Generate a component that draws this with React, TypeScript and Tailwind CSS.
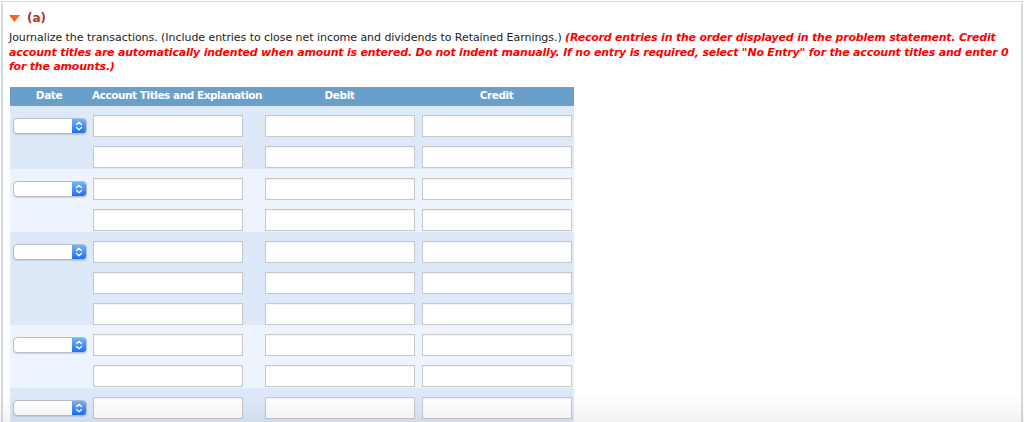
import React from "react";

const groups = [2, 2, 3, 2, 2];

function DateSelect() {
  return (
    <div className="flex h-[16px] w-[74px] rounded-[4px] border border-[#b9bec6] bg-white shadow-[0_1px_1px_rgba(0,0,0,0.12)] overflow-hidden">
      <div className="flex-1" />
      <div className="flex w-[14px] items-center justify-center bg-gradient-to-b from-[#6fb3ff] to-[#1c6ff0]">
        <svg width="8" height="10" viewBox="0 0 8 10" fill="none" stroke="white" strokeWidth="1.3" strokeLinecap="round" strokeLinejoin="round">
          <path d="M1.5 3.5 L4 1.2 L6.5 3.5" />
          <path d="M1.5 6.5 L4 8.8 L6.5 6.5" />
        </svg>
      </div>
    </div>
  );
}

function Box() {
  return <div className="h-[22px] w-[150px] border border-[#c8c8c8] bg-white shadow-[inset_0_1px_1px_rgba(0,0,0,0.05)]" />;
}

export default function App() {
  return (
    <div className="relative h-[422px] w-[1024px] overflow-hidden bg-white pt-px pl-px font-['DejaVu_Sans',sans-serif] text-[#222]">
      <div className="h-[440px] w-[1022px] border-t border-l-2 border-r-2 border-[#d3dbe5] pl-[6px] pt-[9px]">
        <div className="flex h-[14px] items-center">
          <svg width="11" height="7" viewBox="0 0 11 7">
            <polygon points="0,0 11,0 5.5,7" fill="#f26522" />
          </svg>
          <span className="ml-[7px] text-[12px] font-bold text-[#a5392a]">(a)</span>
        </div>
        <div className="mt-[6px] text-[11px] leading-[14.5px] whitespace-nowrap">
          <span className="tracking-[-0.05px]">Journalize the transactions. (Include entries to close net income and dividends to Retained Earnings.) </span>
          <span className="font-bold italic tracking-[-0.2px] text-[#ff0000]">
            (Record entries in the order displayed in the problem statement. Credit
            <br />
            account titles are automatically indented when amount is entered. Do not indent manually. If no entry is required, select "No Entry" for the account titles and enter 0
            <br />
            for the amounts.)
          </span>
        </div>
        <div className="ml-px mt-[12px] w-[564px]">
          <div className="flex h-[19px] items-center whitespace-nowrap bg-[#6a9ecb] text-[10.5px] font-bold text-white">
            <div className="w-[78px] text-center tracking-[-0.4px]">Date</div>
            <div className="w-[172px] pl-[4px] tracking-[-0.45px]">Account Titles and Explanation</div>
            <div className="w-[159px] text-center tracking-[-0.4px]">Debit</div>
            <div className="w-[155px] text-center tracking-[-0.4px]">Credit</div>
          </div>
          {groups.map((n, gi) => (
            <div key={gi} className={`${gi % 2 === 0 ? "bg-[#dde9f8]" : "bg-[#edf4fd]"} ${n === 2 ? "pb-px" : ""}`}>
              {Array.from({ length: n }).map((_, ri) => (
                <div key={ri} className="flex h-[31px] items-start pt-[9px]">
                  <div className="flex h-[22px] w-[78px] items-center pl-[3px]">{ri === 0 ? <DateSelect /> : null}</div>
                  <div className="w-[172px] pl-[5px]">
                    <Box />
                  </div>
                  <div className="w-[159px] pl-[5px]">
                    <Box />
                  </div>
                  <div className="w-[155px] pl-[3px]">
                    <Box />
                  </div>
                </div>
              ))}
            </div>
          ))}
        </div>
      </div>
      <div className="pointer-events-none absolute bottom-0 left-0 right-0 h-[28px] bg-gradient-to-b from-transparent to-[rgba(0,0,0,0.05)]" />
    </div>
  );
}
